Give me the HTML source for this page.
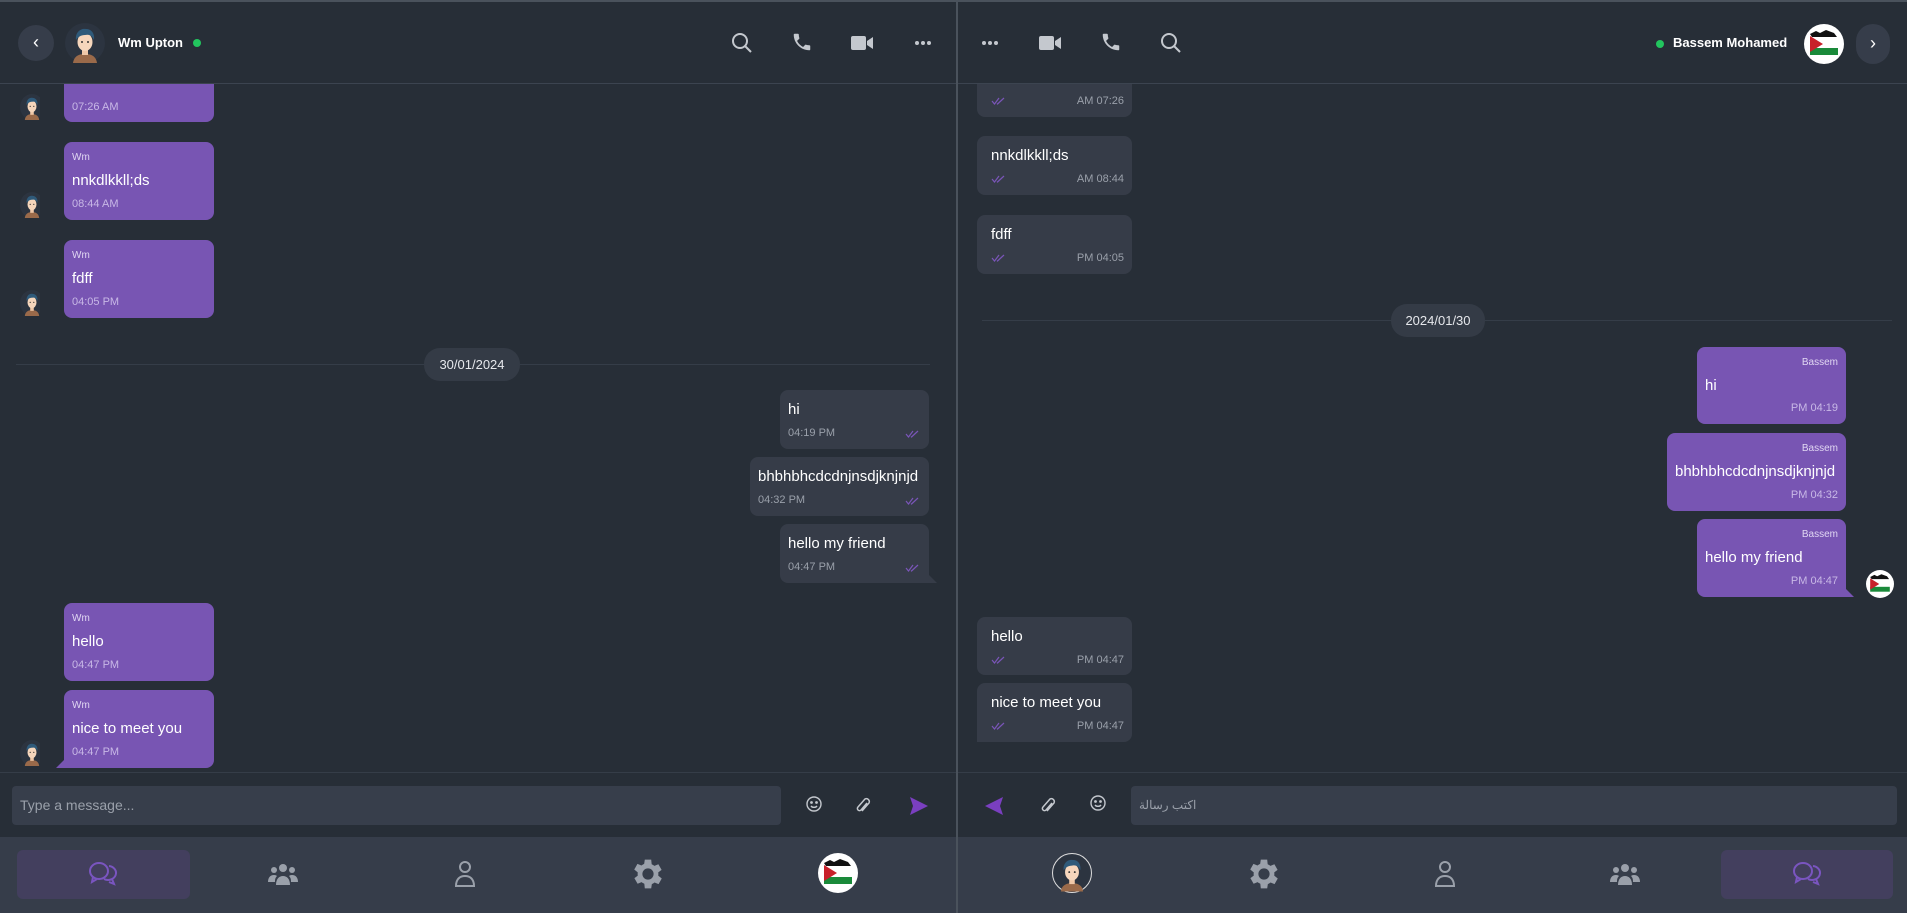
<!DOCTYPE html>
<html><head><meta charset="utf-8"><style>
*{box-sizing:border-box;margin:0;padding:0}
body{width:1907px;height:913px;background:#272e37;font-family:"Liberation Sans","Noto Sans CJK SC",sans-serif;position:relative;overflow:hidden;color:#fff}
.a{position:absolute}
.hdr{top:0;height:84px;border-bottom:1px solid #3c4450;border-top:2px solid #4a525c}
.bub{position:absolute;border-radius:8px;padding:0 8px}
.p{background:#7855b3}
.g{background:#363c48}
.nm{font-size:10px;color:#e0d6f2;position:absolute}
.tx{font-size:15px;color:#fff;position:absolute;white-space:nowrap}
.tm{font-size:11px;color:#c8b8e6;position:absolute;white-space:nowrap}
.g .tm{color:#9aa0aa}
.ck{position:absolute;width:14px;height:8px}
.nav{top:837px;height:76px;background:#363d4a}
.pill{background:#343b46;border-radius:16px;font-size:13px;color:#e6e8ec;text-align:center;line-height:33px}
.line{height:1px;background:#353d48}
.inp{background:#373e4b;border-radius:4px;font-size:14px;color:#9aa0aa;line-height:39px;padding:0 8px}
.dots{position:absolute;width:18px;height:4px}
</style></head><body>
<svg width="0" height="0" style="position:absolute"><defs>
<g id="man"><circle cx="20" cy="20" r="20" fill="#2c3440"/><path d="M8 40c1-7 6-9 12-9s11 2 12 9z" fill="#9a6a4a"/><rect x="17" y="25" width="6" height="7" fill="#f0c8a8"/><ellipse cx="20" cy="19" rx="7.5" ry="9" fill="#f6d6bc"/><path d="M11 17c-1-8 5-12 10-11 5 0 9 4 8 11-2-4-4-6-9-5-4 0-7 2-9 5z" fill="#2f5a7a"/><circle cx="17" cy="19" r="1" fill="#333"/><circle cx="23" cy="19" r="1" fill="#333"/></g>
<g id="flag"><clipPath id="fc"><circle cx="20" cy="20" r="20"/></clipPath><g clip-path="url(#fc)"><rect width="40" height="40" fill="#fff"/><path d="M6 10l6-3 4 2 6-3 8 3 3 4H8z" fill="#111"/><rect x="6" y="24" width="28" height="7" fill="#1a8a3a"/><path d="M6 12l13 8-13 8z" fill="#c8202a"/></g></g>
<g id="ck" fill="none" stroke="#7a55b8" stroke-width="1.2"><path d="M1 4l2.5 3L8 1"/><path d="M6 6.5l0.5 0.5L13 1"/></g>
<g id="dt" fill="#c4c8ce"><circle cx="3" cy="2" r="2"/><circle cx="9" cy="2" r="2"/><circle cx="15" cy="2" r="2"/></g>
<path id="gear" d="M19.4 13a7.5 7.5 0 0 0 0-2l2.1-1.6-2-3.5-2.5 1a7 7 0 0 0-1.7-1L15 3h-4l-.4 2.7a7 7 0 0 0-1.7 1l-2.5-1-2 3.5L6.6 11a7.5 7.5 0 0 0 0 2l-2.1 1.6 2 3.5 2.5-1c.5.4 1.1.8 1.7 1L11 21h4l.4-2.7c.6-.3 1.2-.6 1.7-1l2.5 1 2-3.5zM13 15.5a3.5 3.5 0 1 1 0-7 3.5 3.5 0 0 1 0 7z" transform="translate(-1 0)"/>
</defs></svg>

<!-- LEFT PANE -->
<div class="a hdr" style="left:0;width:956px"></div>
<div class="a" style="left:956px;top:0;width:2px;height:913px;background:#4a525c"></div>
<div class="a" style="left:18px;top:25px;width:36px;height:36px;border-radius:18px;background:#363d4a;text-align:center;line-height:34px;font-size:18px;color:#fff">‹</div>
<svg class="a" style="left:65px;top:23px" width="40" height="40"><use href="#man"/></svg>
<div class="a" style="left:118px;top:35px;font-size:13px;font-weight:bold">Wm Upton</div>
<div class="a" style="left:193px;top:39px;width:8px;height:8px;border-radius:4px;background:#22c55e"></div>
<svg class="a" style="left:730px;top:31px" width="24" height="24" fill="none" stroke="#c4c8ce" stroke-width="2"><circle cx="10" cy="10" r="7"/><path d="M15 15l6 6"/></svg>
<svg class="a" style="left:791px;top:31px" width="22" height="22" viewBox="0 0 24 24" fill="#c4c8ce"><path d="M6.6 10.8a15 15 0 0 0 6.6 6.6l2.2-2.2c.3-.3.7-.4 1-.2 1.1.4 2.3.6 3.6.6.6 0 1 .4 1 1V20c0 .6-.4 1-1 1C10.6 21 3 13.4 3 4c0-.6.4-1 1-1h3.5c.6 0 1 .4 1 1 0 1.3.2 2.5.6 3.6.1.3 0 .7-.2 1z"/></svg>
<svg class="a" style="left:850px;top:34px" width="24" height="18" fill="#c4c8ce"><rect x="1" y="2" width="15" height="14" rx="2"/><path d="M17 7l6-4v12l-6-4z"/></svg>
<svg class="dots" style="left:914px;top:41px"><use href="#dt"/></svg>

<!-- left messages -->
<div class="bub p" style="left:64px;top:84px;width:150px;height:38px;border-radius:0 0 8px 8px"><div class="tm" style="left:8px;top:17px">07:26 AM</div></div>
<svg class="a" style="left:20px;top:94px" width="20" height="26"><use href="#man" transform="scale(.6 .65)"/></svg>

<div class="bub p" style="left:64px;top:142px;width:150px;height:78px"><div class="nm" style="left:8px;top:10px">Wm</div><div class="tx" style="left:8px;top:30px">nnkdlkkll;ds</div><div class="tm" style="left:8px;top:56px">08:44 AM</div></div>
<svg class="a" style="left:20px;top:192px" width="20" height="26"><use href="#man" transform="scale(.6 .65)"/></svg>

<div class="bub p" style="left:64px;top:240px;width:150px;height:78px"><div class="nm" style="left:8px;top:10px">Wm</div><div class="tx" style="left:8px;top:30px">fdff</div><div class="tm" style="left:8px;top:56px">04:05 PM</div></div>
<svg class="a" style="left:20px;top:290px" width="20" height="26"><use href="#man" transform="scale(.6 .65)"/></svg>

<div class="a line" style="left:16px;top:364px;width:914px"></div>
<div class="a pill" style="left:424px;top:348px;width:96px;height:33px">30/01/2024</div>

<div class="bub g" style="left:780px;top:390px;width:149px;height:59px"><div class="tx" style="left:8px;top:11px">hi</div><div class="tm" style="left:8px;top:37px">04:19 PM</div><svg class="ck" style="right:10px;top:40px"><use href="#ck"/></svg></div>
<div class="bub g" style="left:750px;top:457px;width:179px;height:59px"><div class="tx" style="left:8px;top:11px">bhbhbhcdcdnjnsdjknjnjd</div><div class="tm" style="left:8px;top:37px">04:32 PM</div><svg class="ck" style="right:10px;top:40px"><use href="#ck"/></svg></div>
<div class="bub g" style="left:780px;top:524px;width:149px;height:59px;border-bottom-right-radius:0"><div class="tx" style="left:8px;top:11px">hello my friend</div><div class="tm" style="left:8px;top:37px">04:47 PM</div><svg class="ck" style="right:10px;top:40px"><use href="#ck"/></svg></div>
<div class="a" style="left:929px;top:575px;width:0;height:0;border-left:8px solid #363c48;border-top:8px solid transparent"></div>

<div class="bub p" style="left:64px;top:603px;width:150px;height:78px"><div class="nm" style="left:8px;top:10px">Wm</div><div class="tx" style="left:8px;top:30px">hello</div><div class="tm" style="left:8px;top:56px">04:47 PM</div></div>
<div class="bub p" style="left:64px;top:690px;width:150px;height:78px;border-bottom-left-radius:0"><div class="nm" style="left:8px;top:10px">Wm</div><div class="tx" style="left:8px;top:30px">nice to meet you</div><div class="tm" style="left:8px;top:56px">04:47 PM</div></div>
<div class="a" style="left:56px;top:760px;width:0;height:0;border-right:8px solid #7855b3;border-top:8px solid transparent"></div>
<svg class="a" style="left:20px;top:740px" width="20" height="26"><use href="#man" transform="scale(.6 .65)"/></svg>

<div class="a line" style="left:0;top:772px;width:956px"></div>
<div class="a inp" style="left:12px;top:786px;width:769px;height:39px">Type a message...</div>
<svg class="a" style="left:806px;top:796px" width="16" height="16" fill="none" stroke="#c4c8ce" stroke-width="1.4"><circle cx="8" cy="8" r="7"/><circle cx="5.5" cy="6.5" r=".7" fill="#c4c8ce"/><circle cx="10.5" cy="6.5" r=".7" fill="#c4c8ce"/><path d="M5 10c1.5 1.8 4.5 1.8 6 0"/></svg>
<svg class="a" style="left:855px;top:797px" width="16" height="18" fill="none" stroke="#c4c8ce" stroke-width="1.5"><path d="M12 6l-6 7a2 2 0 0 1-3-3l7-8a3 3 0 0 1 4 4l-7 8"/></svg>
<svg class="a" style="left:909px;top:796px" width="20" height="20"><path d="M1 1l18 9-18 9 3-9z" fill="#7a3fc0"/></svg>

<div class="a nav" style="left:0;width:956px"></div>
<div class="a" style="left:17px;top:850px;width:173px;height:49px;border-radius:6px;background:#433f5e"></div>
<svg class="a" style="left:88px;top:860px" width="30" height="28" fill="none" stroke="#7a55c0" stroke-width="2"><ellipse cx="11" cy="11" rx="9" ry="8"/><path d="M5 17l-1 5 5-3"/><path d="M16 19a8 7 0 1 0 5-13"/><path d="M24 19l2 5-5-2"/></svg>
<svg class="a" style="left:268px;top:862px" width="30" height="24" fill="#9aa0aa"><circle cx="15" cy="6" r="4"/><circle cx="6" cy="8" r="3"/><circle cx="24" cy="8" r="3"/><path d="M8 23c0-6 3-9 7-9s7 3 7 9z"/><path d="M0 20c0-4 2-7 6-7 2 0 3 1 3 1-2 2-2 4-2 6z"/><path d="M30 20c0-4-2-7-6-7-2 0-3 1-3 1 2 2 2 4 2 6z"/></svg>
<svg class="a" style="left:454px;top:860px" width="22" height="28" fill="none" stroke="#9aa0aa" stroke-width="2"><circle cx="11" cy="7" r="5"/><path d="M2 26c0-7 4-10 9-10s9 3 9 10z"/></svg>
<svg class="a" style="left:632px;top:858px" width="32" height="32" viewBox="2 2 20 20" fill="#9aa0aa"><use href="#gear"/></svg>
<svg class="a" style="left:818px;top:853px" width="40" height="40"><use href="#flag"/></svg>

<!-- RIGHT PANE -->
<div class="a hdr" style="left:958px;width:949px"></div>
<svg class="dots" style="left:981px;top:41px"><use href="#dt"/></svg>
<svg class="a" style="left:1038px;top:34px" width="24" height="18" fill="#c4c8ce"><rect x="1" y="2" width="15" height="14" rx="2"/><path d="M17 7l6-4v12l-6-4z"/></svg>
<svg class="a" style="left:1100px;top:31px" width="22" height="22" viewBox="0 0 24 24" fill="#c4c8ce"><path d="M6.6 10.8a15 15 0 0 0 6.6 6.6l2.2-2.2c.3-.3.7-.4 1-.2 1.1.4 2.3.6 3.6.6.6 0 1 .4 1 1V20c0 .6-.4 1-1 1C10.6 21 3 13.4 3 4c0-.6.4-1 1-1h3.5c.6 0 1 .4 1 1 0 1.3.2 2.5.6 3.6.1.3 0 .7-.2 1z"/></svg>
<svg class="a" style="left:1159px;top:31px" width="24" height="24" fill="none" stroke="#c4c8ce" stroke-width="2"><circle cx="10" cy="10" r="7"/><path d="M15 15l6 6"/></svg>
<div class="a" style="left:1656px;top:40px;width:8px;height:8px;border-radius:4px;background:#22c55e"></div>
<div class="a" style="left:1673px;top:35px;font-size:13px;font-weight:bold">Bassem Mohamed</div>
<svg class="a" style="left:1804px;top:24px" width="40" height="40"><use href="#flag"/></svg>
<div class="a" style="left:1856px;top:24px;width:34px;height:40px;border-radius:17px;background:#363d4a;text-align:center;line-height:38px;font-size:18px;color:#fff">›</div>

<div class="bub g" style="left:977px;top:84px;width:155px;height:33px;border-radius:0 0 8px 8px"><svg class="ck" style="left:14px;top:13px"><use href="#ck"/></svg><div class="tm" style="right:8px;top:11px">AM 07:26</div></div>
<div class="bub g" style="left:977px;top:136px;width:155px;height:59px"><div class="tx" style="left:14px;top:11px">nnkdlkkll;ds</div><svg class="ck" style="left:14px;top:39px"><use href="#ck"/></svg><div class="tm" style="right:8px;top:37px">AM 08:44</div></div>
<div class="bub g" style="left:977px;top:215px;width:155px;height:59px"><div class="tx" style="left:14px;top:11px">fdff</div><svg class="ck" style="left:14px;top:39px"><use href="#ck"/></svg><div class="tm" style="right:8px;top:37px">PM 04:05</div></div>

<div class="a line" style="left:982px;top:320px;width:910px"></div>
<div class="a pill" style="left:1391px;top:304px;width:94px;height:33px">2024/01/30</div>

<div class="bub p" style="left:1697px;top:347px;width:149px;height:77px"><div class="nm" style="right:8px;top:10px">Bassem</div><div class="tx" style="left:8px;top:30px">hi</div><div class="tm" style="right:8px;top:55px">PM 04:19</div></div>
<div class="bub p" style="left:1667px;top:433px;width:179px;height:78px"><div class="nm" style="right:8px;top:10px">Bassem</div><div class="tx" style="left:8px;top:30px">bhbhbhcdcdnjnsdjknjnjd</div><div class="tm" style="right:8px;top:56px">PM 04:32</div></div>
<div class="bub p" style="left:1697px;top:519px;width:149px;height:78px;border-bottom-right-radius:0"><div class="nm" style="right:8px;top:10px">Bassem</div><div class="tx" style="left:8px;top:30px">hello my friend</div><div class="tm" style="right:8px;top:56px">PM 04:47</div></div>
<div class="a" style="left:1846px;top:589px;width:0;height:0;border-left:8px solid #7855b3;border-top:8px solid transparent"></div>
<svg class="a" style="left:1866px;top:570px" width="28" height="28"><use href="#flag" transform="scale(.7)"/></svg>

<div class="bub g" style="left:977px;top:617px;width:155px;height:58px"><div class="tx" style="left:14px;top:11px">hello</div><svg class="ck" style="left:14px;top:39px"><use href="#ck"/></svg><div class="tm" style="right:8px;top:37px">PM 04:47</div></div>
<div class="bub g" style="left:977px;top:683px;width:155px;height:59px;border-bottom-left-radius:0"><div class="tx" style="left:14px;top:11px">nice to meet you</div><svg class="ck" style="left:14px;top:39px"><use href="#ck"/></svg><div class="tm" style="right:8px;top:37px">PM 04:47</div></div>

<div class="a line" style="left:958px;top:772px;width:949px"></div>
<svg class="a" style="left:984px;top:797px" width="20" height="18"><path d="M19 0L1 9l18 9-3-9z" fill="#7a3fc0"/></svg>
<svg class="a" style="left:1040px;top:797px" width="16" height="18" fill="none" stroke="#c4c8ce" stroke-width="1.5"><path d="M12 6l-6 7a2 2 0 0 1-3-3l7-8a3 3 0 0 1 4 4l-7 8"/></svg>
<svg class="a" style="left:1090px;top:795px" width="16" height="16" fill="none" stroke="#c4c8ce" stroke-width="1.4"><circle cx="8" cy="8" r="7"/><circle cx="5.5" cy="6.5" r=".7" fill="#c4c8ce"/><circle cx="10.5" cy="6.5" r=".7" fill="#c4c8ce"/><path d="M5 10c1.5 1.8 4.5 1.8 6 0"/></svg>
<div class="a inp" style="left:1131px;top:786px;width:766px;height:39px;font-size:12px">اكتب رسالة</div>

<div class="a nav" style="left:958px;width:949px"></div>
<svg class="a" style="left:1052px;top:853px" width="40" height="40"><circle cx="20" cy="20" r="19.5" fill="none" stroke="#ddd"/><use href="#man" transform="translate(1.5 1.5) scale(.925)"/></svg>
<svg class="a" style="left:1248px;top:858px" width="32" height="32" viewBox="2 2 20 20" fill="#9aa0aa"><use href="#gear"/></svg>
<svg class="a" style="left:1434px;top:860px" width="22" height="28" fill="none" stroke="#9aa0aa" stroke-width="2"><circle cx="11" cy="7" r="5"/><path d="M2 26c0-7 4-10 9-10s9 3 9 10z"/></svg>
<svg class="a" style="left:1610px;top:862px" width="30" height="24" fill="#9aa0aa"><circle cx="15" cy="6" r="4"/><circle cx="6" cy="8" r="3"/><circle cx="24" cy="8" r="3"/><path d="M8 23c0-6 3-9 7-9s7 3 7 9z"/><path d="M0 20c0-4 2-7 6-7 2 0 3 1 3 1-2 2-2 4-2 6z"/><path d="M30 20c0-4-2-7-6-7-2 0-3 1-3 1 2 2 2 4 2 6z"/></svg>
<div class="a" style="left:1721px;top:850px;width:172px;height:49px;border-radius:6px;background:#433f5e"></div>
<svg class="a" style="left:1792px;top:860px" width="30" height="28" fill="none" stroke="#7a55c0" stroke-width="2"><ellipse cx="11" cy="11" rx="9" ry="8"/><path d="M5 17l-1 5 5-3"/><path d="M16 19a8 7 0 1 0 5-13"/><path d="M24 19l2 5-5-2"/></svg>
</body></html>
